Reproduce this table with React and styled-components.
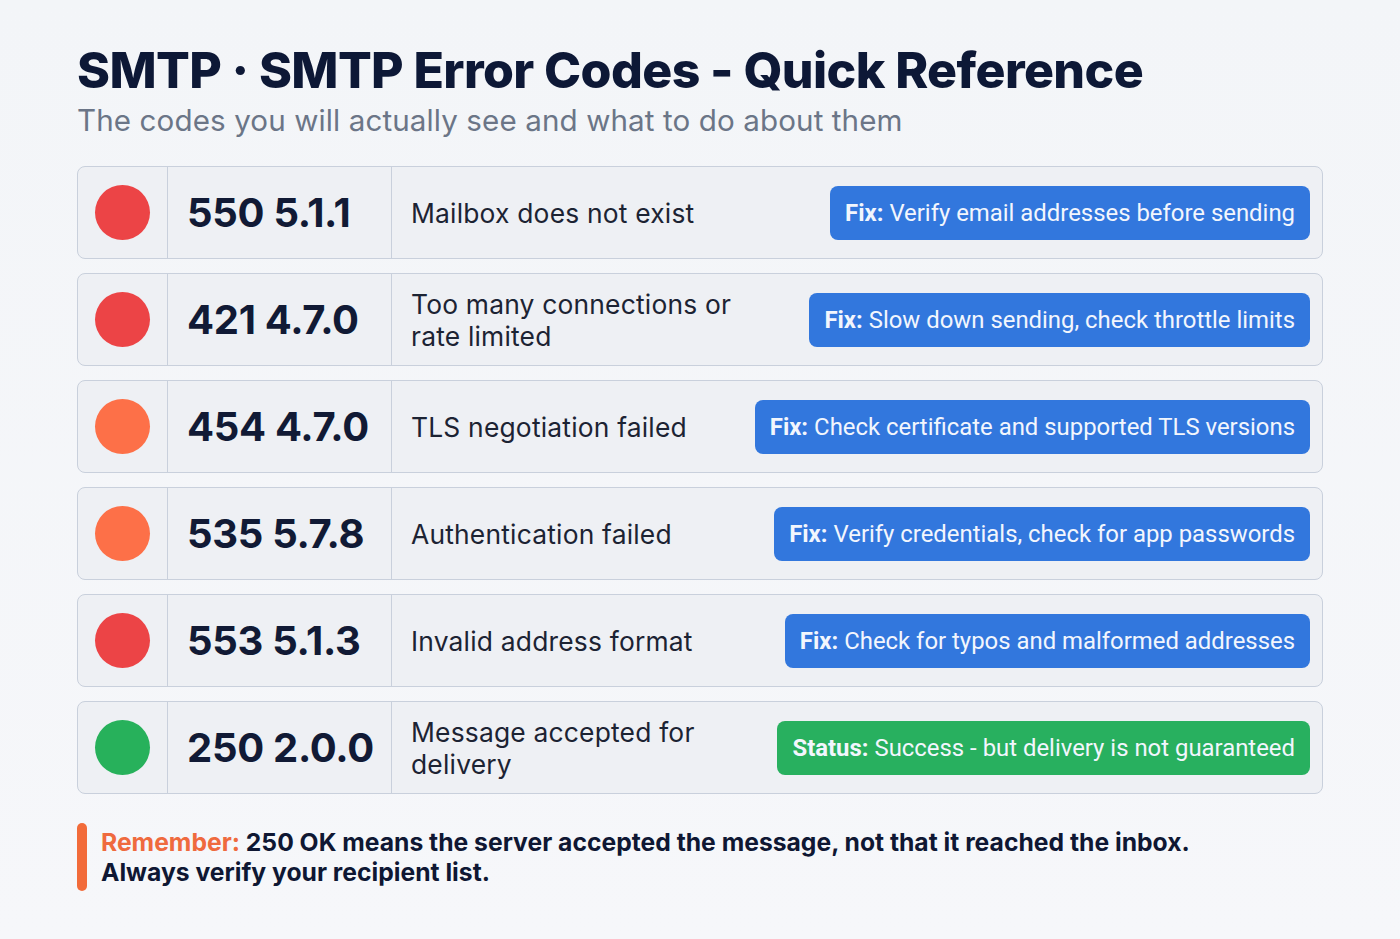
import React from "react";
import styled, { createGlobalStyle } from "styled-components";

const Global = createGlobalStyle`
  html, body { margin: 0; padding: 0; }
  body {
    background: #f4f6f9;
    font-family: Inter, "Noto Sans", sans-serif;
  }
`;

const Page = styled.div`
  width: 1400px;
  height: 939px;
  box-sizing: border-box;
  padding: 39px 77px 0 77px;
  background: linear-gradient(180deg, #f3f5f8 0%, #f6f7fa 100%);
`;

const Title = styled.h1`
  margin: 0;
  font-family: Inter, sans-serif;
  font-weight: 800;
  font-size: 50px;
  line-height: 62px;
  letter-spacing: -0.6px;
  color: #0d1836;
`;

const Subtitle = styled.p`
  margin: 0;
  font-family: Inter, sans-serif;
  font-size: 29.6px;
  line-height: 38px;
  color: #6b7587;
  letter-spacing: 0.1px;
`;

const List = styled.div`
  margin-top: 27px;
  display: flex;
  flex-direction: column;
  gap: 14px;
`;

const Row = styled.div`
  display: flex;
  align-items: stretch;
  height: 93px;
  box-sizing: border-box;
  border: 1.5px solid #c9d0dc;
  border-radius: 8px;
  background: #eef0f4;
`;

const DotCell = styled.div`
  width: 89px;
  flex: none;
  display: flex;
  align-items: center;
  justify-content: center;
  border-right: 1.5px solid #c9d0dc;
`;

const Dot = styled.span`
  width: 55px;
  height: 55px;
  border-radius: 50%;
  background: ${(p) => p.$color};
`;

const CodeCell = styled.div`
  width: 224px;
  flex: none;
  display: flex;
  align-items: center;
  padding-left: 19px;
  box-sizing: border-box;
  border-right: 1.5px solid #c9d0dc;
  font-family: Inter, sans-serif;
  font-weight: 700;
  font-size: 40px;
  letter-spacing: -0.3px;
  white-space: nowrap;
  color: #111a35;
`;

const DescCell = styled.div`
  flex: 1;
  min-width: 0;
  display: flex;
  align-items: center;
  justify-content: space-between;
  gap: 24px;
  padding: 0 12px 0 19px;
`;

const Desc = styled.div`
  max-width: 340px;
  font-family: Inter, sans-serif;
  font-size: 26.4px;
  line-height: 32px;
  color: #1c2333;
  letter-spacing: 0.2px;
`;

const Pill = styled.div`
  flex: none;
  height: 54px;
  display: flex;
  align-items: center;
  padding: 0 15px;
  border-radius: 8px;
  background: ${(p) => (p.$green ? "#28b05f" : "#3277dd")};
  color: #f2f6fd;
  font-family: Roboto, "Liberation Sans", sans-serif;
  font-size: 23.9px;
  white-space: nowrap;
  b { font-weight: 700; margin-right: 6px; }
`;

const Note = styled.div`
  margin-top: 29px;
  display: flex;
  gap: 14px;
  align-items: stretch;
`;

const Bar = styled.span`
  width: 10px;
  flex: none;
  border-radius: 5px;
  background: #f26b3a;
`;

const NoteText = styled.p`
  margin: 4px 0;
  font-family: Inter, sans-serif;
  font-weight: 700;
  font-size: 24.7px;
  line-height: 30px;
  color: #0f1733;
  span { color: #ef6a3e; }
`;

const rows = [
  { color: "#ec4446", code: "550 5.1.1", desc: "Mailbox does not exist", label: "Fix:", text: "Verify email addresses before sending" },
  { color: "#ec4446", code: "421 4.7.0", desc: "Too many connections or rate limited", label: "Fix:", text: "Slow down sending, check throttle limits" },
  { color: "#fd7048", code: "454 4.7.0", desc: "TLS negotiation failed", label: "Fix:", text: "Check certificate and supported TLS versions" },
  { color: "#fd7048", code: "535 5.7.8", desc: "Authentication failed", label: "Fix:", text: "Verify credentials, check for app passwords" },
  { color: "#ec4446", code: "553 5.1.3", desc: "Invalid address format", label: "Fix:", text: "Check for typos and malformed addresses" },
  { color: "#27b15b", code: "250 2.0.0", desc: "Message accepted for delivery", label: "Status:", text: "Success - but delivery is not guaranteed", green: true },
];

export default function App() {
  return (
    <>
      <Global />
      <Page>
        <Title>SMTP · SMTP Error Codes - Quick Reference</Title>
        <Subtitle>The codes you will actually see and what to do about them</Subtitle>
        <List>
          {rows.map((r) => (
            <Row key={r.code}>
              <DotCell>
                <Dot $color={r.color} />
              </DotCell>
              <CodeCell>{r.code}</CodeCell>
              <DescCell>
                <Desc>{r.desc}</Desc>
                <Pill $green={r.green}>
                  <b>{r.label}</b>
                  {r.text}
                </Pill>
              </DescCell>
            </Row>
          ))}
        </List>
        <Note>
          <Bar />
          <NoteText>
            <span>Remember:</span> 250 OK means the server accepted the message, not that it reached the inbox.
            <br />
            Always verify your recipient list.
          </NoteText>
        </Note>
      </Page>
    </>
  );
}
